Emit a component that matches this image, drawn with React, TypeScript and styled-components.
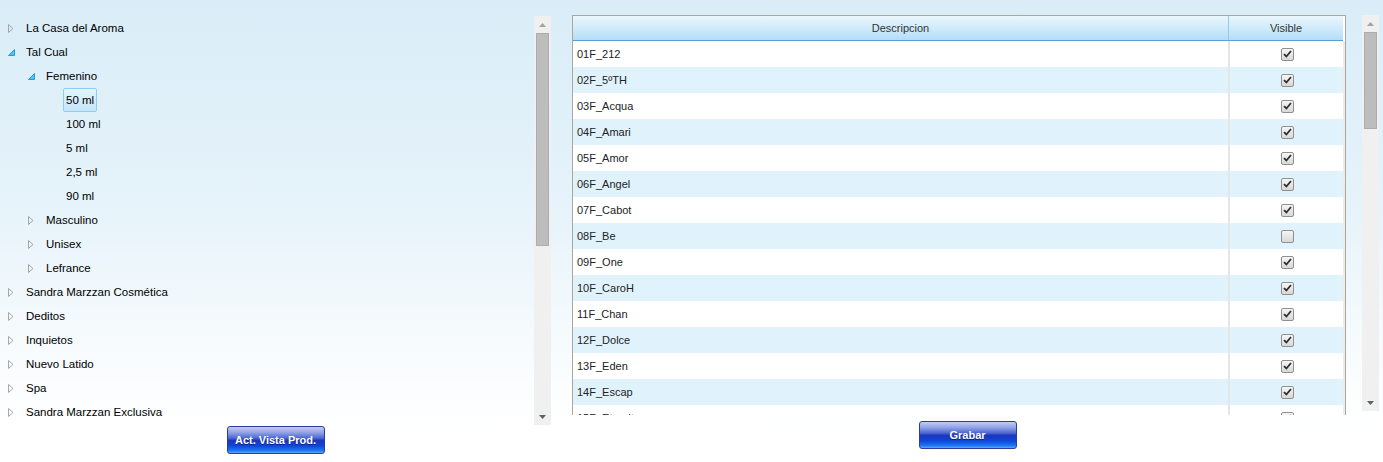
import React from 'react';
import styled, { createGlobalStyle } from 'styled-components';

const GlobalStyle = createGlobalStyle`
	html, body {
		margin: 0;
		padding: 0;
	}
	body {
		font-family: "Liberation Sans", Arial, sans-serif;
		background: #fff;
	}
`;

const Page = styled.div`
	width: 1383px;
	height: 462px;
	display: flex;
	background: linear-gradient(to bottom, #d9edf8 0%, #e6f3fa 45%, #f7fbfd 75%, #ffffff 92%);
	overflow: hidden;
`;

const LeftColumn = styled.div`
	width: 551px;
	display: flex;
	flex-direction: column;
	padding-top: 16px;
`;

const RightColumn = styled.div`
	width: 807px;
	margin-left: 21px;
	display: flex;
	flex-direction: column;
	padding-top: 15px;
`;

const Panel = styled.div<{ height: number }>`
	display: flex;
	height: ${(props): number => props.height}px;
	gap: ${(props): string => (props.height > 400 ? '0' : '16px')};
`;

const TreeList = styled.div`
	flex: 1;
	overflow: hidden;
`;

const TreeRow = styled.div<{ level: number }>`
	height: 24px;
	display: flex;
	align-items: center;
	padding-left: ${(props): number => props.level * 20}px;
	font-size: 11.5px;
	color: #000;
`;

const Expander = styled.span`
	width: 20px;
	height: 24px;
	display: flex;
	align-items: center;
	padding-left: 8px;
	box-sizing: border-box;
`;

const Label = styled.span<{ selected?: boolean }>`
	margin-left: 3px;
	padding: 0 2px;
	height: 22px;
	line-height: 22px;
	border: 1px solid ${(props): string => (props.selected ? '#8ccdf1' : 'transparent')};
	border-radius: 2px;
	background: ${(props): string => (props.selected ? 'linear-gradient(#e4f4fd, #c6e6f9)' : 'transparent')};
	white-space: nowrap;
`;

const ScrollBar = styled.div`
	width: 17px;
	background: #f0f0f0;
	display: flex;
	flex-direction: column;
	flex-shrink: 0;
`;

const ScrollArrow = styled.div<{ dark?: boolean }>`
	height: 17px;
	display: flex;
	align-items: center;
	justify-content: center;
	color: ${(props): string => (props.dark ? '#606060' : '#a3a3a3')};
`;

const ScrollTrack = styled.div`
	flex: 1;
	display: flex;
	flex-direction: column;
`;

const Thumb = styled.div<{ size: number }>`
	height: ${(props): number => props.size}px;
	margin: 0 2px;
	background: #bdbdbd;
	border: 1px solid #adadad;
	box-sizing: border-box;
`;

const ButtonRow = styled.div<{ top: number; shift?: number }>`
	display: flex;
	justify-content: center;
	padding-top: ${(props): number => props.top}px;
	padding-right: ${(props): number => props.shift ?? 0}px;
`;

const BlueButton = styled.button`
	width: 98px;
	height: 28px;
	border: 1px solid #2a3c9c;
	border-radius: 3px;
	background: linear-gradient(
		to bottom,
		#c3cdf4 0%,
		#8ea1e6 22%,
		#5068d2 42%,
		#1a36bd 52%,
		#0f46d8 72%,
		#1a74f2 90%,
		#5aa8fa 100%
	);
	color: #fff;
	font-family: "Liberation Sans", Arial, sans-serif;
	font-weight: bold;
	font-size: 11px;
	text-shadow: 0 1px 0 rgba(0, 0, 40, 0.5);
	padding: 0;
	cursor: pointer;
`;

const Grid = styled.div`
	width: 774px;
	height: 400px;
	border: 1px solid #aca899;
	border-bottom: none;
	box-sizing: border-box;
	background: #fff;
	overflow: hidden;
`;

const HeaderRow = styled.div`
	display: grid;
	grid-template-columns: 655px 115px;
	height: 24px;
	background: linear-gradient(to bottom, #eaf6fd 0%, #d3ecfb 45%, #b4ddf7 100%);
	border-bottom: 1px solid #5b9fd2;
	width: 770px;
`;

const HeaderCell = styled.div<{ last?: boolean }>`
	display: flex;
	align-items: center;
	justify-content: center;
	font-size: 11px;
	color: #333;
	border-left: ${(props): string => (props.last ? '1px solid #93c9ec' : 'none')};
`;

const Row = styled.div<{ alt: boolean }>`
	display: grid;
	grid-template-columns: 655px 115px;
	height: 26px;
	width: 770px;
	border-right: 2px solid #ececec;
	background: ${(props): string => (props.alt ? '#e0f3fc' : '#ffffff')};
`;

const Cell = styled.div<{ center?: boolean }>`
	display: flex;
	align-items: center;
	justify-content: ${(props): string => (props.center ? 'center' : 'flex-start')};
	padding-left: ${(props): string => (props.center ? '0' : '4px')};
	font-size: 11px;
	color: #222;
	border-left: ${(props): string => (props.center ? '2px solid #e6e6e6' : 'none')};
`;

const Check = styled.span`
	width: 13px;
	height: 13px;
	box-sizing: border-box;
	border: 1px solid #8f8f8f;
	border-radius: 2px;
	background: linear-gradient(#f6f6f6, #d8d8d8);
	display: flex;
	align-items: center;
	justify-content: center;
	margin-left: 1px;
`;

const Collapsed: React.FC = () => (
	<svg width="6" height="9" viewBox="0 0 6 9">
		<path d="M0.5 0.5 L5 4.5 L0.5 8.5 Z" fill="none" stroke="#a6a6a6" strokeWidth="1" />
	</svg>
);

const Expanded: React.FC = () => (
	<svg width="7" height="7" viewBox="0 0 7 7">
		<path d="M6.5 0.5 L6.5 6.5 L0.5 6.5 Z" fill="#4fc3f4" stroke="#1f9fd9" strokeWidth="1" />
	</svg>
);

const Arrow: React.FC<{ up?: boolean }> = ({ up }) => (
	<svg width="7" height="4" viewBox="0 0 7 4">
		<path d={up ? 'M0 4 L3.5 0 L7 4 Z' : 'M0 0 L7 0 L3.5 4 Z'} fill="currentColor" />
	</svg>
);

const Scroller: React.FC<{ thumb: number }> = ({ thumb }) => (
	<ScrollBar>
		<ScrollArrow>
			<Arrow up />
		</ScrollArrow>
		<ScrollTrack>
			<Thumb size={thumb} />
		</ScrollTrack>
		<ScrollArrow dark>
			<Arrow />
		</ScrollArrow>
	</ScrollBar>
);

type Node = { label: string; level: number; state: 'open' | 'closed' | 'leaf'; selected?: boolean };

const tree: Node[] = [
	{ label: 'La Casa del Aroma', level: 0, state: 'closed' },
	{ label: 'Tal Cual', level: 0, state: 'open' },
	{ label: 'Femenino', level: 1, state: 'open' },
	{ label: '50 ml', level: 2, state: 'leaf', selected: true },
	{ label: '100 ml', level: 2, state: 'leaf' },
	{ label: '5 ml', level: 2, state: 'leaf' },
	{ label: '2,5 ml', level: 2, state: 'leaf' },
	{ label: '90 ml', level: 2, state: 'leaf' },
	{ label: 'Masculino', level: 1, state: 'closed' },
	{ label: 'Unisex', level: 1, state: 'closed' },
	{ label: 'Lefrance', level: 1, state: 'closed' },
	{ label: 'Sandra Marzzan Cosmética', level: 0, state: 'closed' },
	{ label: 'Deditos', level: 0, state: 'closed' },
	{ label: 'Inquietos', level: 0, state: 'closed' },
	{ label: 'Nuevo Latido', level: 0, state: 'closed' },
	{ label: 'Spa', level: 0, state: 'closed' },
	{ label: 'Sandra Marzzan Exclusiva', level: 0, state: 'closed' },
];

const products: [string, boolean][] = [
	['01F_212', true],
	['02F_5ºTH', true],
	['03F_Acqua', true],
	['04F_Amari', true],
	['05F_Amor', true],
	['06F_Angel', true],
	['07F_Cabot', true],
	['08F_Be', false],
	['09F_One', true],
	['10F_CaroH', true],
	['11F_Chan', true],
	['12F_Dolce', true],
	['13F_Eden', true],
	['14F_Escap', true],
	['15F_Eternity', true],
];

const App: React.FC = () => {
	return (
		<>
			<GlobalStyle />
			<Page>
				<LeftColumn>
					<Panel height={409}>
						<TreeList>
							{tree.map((n) => (
								<TreeRow key={n.label + n.level} level={n.level}>
									<Expander>
										{n.state === 'open' ? <Expanded /> : n.state === 'closed' ? <Collapsed /> : null}
									</Expander>
									<Label selected={n.selected}>{n.label}</Label>
								</TreeRow>
							))}
						</TreeList>
						<Scroller thumb={213} />
					</Panel>
					<ButtonRow top={1}>
						<BlueButton>Act. Vista Prod.</BlueButton>
					</ButtonRow>
				</LeftColumn>
				<RightColumn>
					<Panel height={396}>
						<Grid>
							<HeaderRow>
								<HeaderCell>Descripcion</HeaderCell>
								<HeaderCell last>Visible</HeaderCell>
							</HeaderRow>
							{products.map(([name, visible], i) => (
								<Row key={name} alt={i % 2 === 1}>
									<Cell>{name}</Cell>
									<Cell center>
										<Check>
											{visible && (
												<svg width="9" height="8" viewBox="0 0 9 8">
													<path
														d="M1 4.2 L3.4 6.5 L8 1"
														fill="none"
														stroke="#2e2e2e"
														strokeWidth="1.8"
													/>
												</svg>
											)}
										</Check>
									</Cell>
								</Row>
							))}
						</Grid>
						<Scroller thumb={97} />
					</Panel>
					<ButtonRow top={10} shift={16}>
						<BlueButton>Grabar</BlueButton>
					</ButtonRow>
				</RightColumn>
			</Page>
		</>
	);
};

export default App;
